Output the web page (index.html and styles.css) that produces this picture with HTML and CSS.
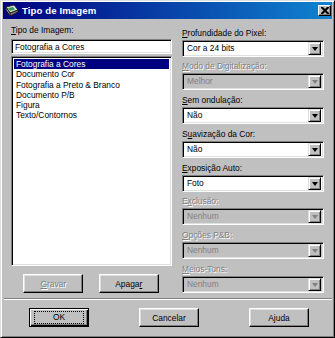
FILE: index.html
```html
<!DOCTYPE html>
<html>
<head>
    <meta charset="UTF-8">
    <title>Tipo de Imagem</title>
    <link rel="stylesheet" href="styles.css">
</head>
<body>
    <div class="window">
        <!-- Title bar -->
        <div class="titlebar">
            <svg class="app-icon" width="14" height="14" viewBox="0 0 14 14">
                <path d="M1 3 L9 1 L13 6 L5 9 Z" fill="#e8e8e8" stroke="#202020" stroke-width="1"/>
                <path d="M5 9 L13 6 L13 8 L5 12 Z" fill="#808080" stroke="#202020" stroke-width="1"/>
                <path d="M1 3 L5 9 L5 12 L1 6 Z" fill="#a0a0a0" stroke="#202020" stroke-width="1"/>
                <path d="M3 4 L8 3 L10 5.5 L5 7 Z" fill="#2f9e44"/>
                <path d="M6 4 L8 3.5 L9 5 Z" fill="#3a7bd5"/>
            </svg>
            <span class="title">Tipo de Imagem</span>
            <div class="close-btn">
                <svg width="8" height="7" viewBox="0 0 8 7">
                    <path d="M0 0h2l2 2 2-2h2v1l-2.5 2.5 2.5 2.5v1h-2l-2-2-2 2h-2v-1l2.5-2.5-2.5-2.5z" fill="#000"/>
                </svg>
            </div>
        </div>

        <div class="content">
            <!-- Left: image type list -->
            <div class="left-col">
                <div class="label"><u>T</u>ipo de Imagem:</div>
                <div class="textbox">Fotografia a Cores</div>
                <div class="listbox">
                    <div class="item selected">Fotografia a Cores</div>
                    <div class="item">Documento Cor</div>
                    <div class="item">Fotografia a Preto &amp; Branco</div>
                    <div class="item">Documento P/B</div>
                    <div class="item">Figura</div>
                    <div class="item">Texto/Contornos</div>
                </div>
                <div class="left-buttons">
                    <div class="btn disabled"><u>G</u>ravar</div>
                    <div class="btn">Apaga<u>r</u></div>
                </div>
            </div>

            <!-- Right: settings -->
            <div class="right-col">
                <div class="field">
                    <div class="label"><u>P</u>rofundidade do Pixel:</div>
                    <div class="combo"><span>Cor a 24 bits</span><div class="drop"><i></i></div></div>
                </div>
                <div class="field disabled">
                    <div class="label"><u>M</u>odo de Digitalização:</div>
                    <div class="combo"><span>Melhor</span><div class="drop"><i></i></div></div>
                </div>
                <div class="field">
                    <div class="label"><u>S</u>em ondulação:</div>
                    <div class="combo"><span>Não</span><div class="drop"><i></i></div></div>
                </div>
                <div class="field">
                    <div class="label">S<u>u</u>avização da Cor:</div>
                    <div class="combo"><span>Não</span><div class="drop"><i></i></div></div>
                </div>
                <div class="field">
                    <div class="label"><u>E</u>xposição Auto:</div>
                    <div class="combo"><span>Foto</span><div class="drop"><i></i></div></div>
                </div>
                <div class="field disabled">
                    <div class="label">E<u>x</u>clusão:</div>
                    <div class="combo"><span>Nenhum</span><div class="drop"><i></i></div></div>
                </div>
                <div class="field disabled">
                    <div class="label"><u>O</u>pções P&amp;B:</div>
                    <div class="combo"><span>Nenhum</span><div class="drop"><i></i></div></div>
                </div>
                <div class="field disabled">
                    <div class="label"><u>M</u>eios-Tons:</div>
                    <div class="combo"><span>Nenhum</span><div class="drop"><i></i></div></div>
                </div>
            </div>
        </div>

        <div class="separator"></div>

        <div class="bottom-buttons">
            <div class="btn default"><span class="focus">OK</span></div>
            <div class="btn">Cancelar</div>
            <div class="btn">Ajuda</div>
        </div>
    </div>
</body>
</html>
```

FILE: styles.css
```css
body {
    margin: 0;
    font-family: "Liberation Sans", Arial, sans-serif;
    font-size: 8.4px;
    color: #000;
    background: #c0c0c0;
}
.window {
    width: 335px;
    height: 338px;
    box-sizing: border-box;
    background: #c0c0c0;
    border: 1px solid;
    border-color: #dfdfdf #000 #000 #dfdfdf;
    box-shadow: inset 1px 1px #fff, inset -1px -1px #808080;
    padding: 1px 2px 2px 2px;
}
/* Title bar */
.titlebar {
    height: 17px;
    display: flex;
    align-items: center;
    padding: 0 1px 0 2px;
    background: linear-gradient(to right, #000080, #1084d0);
    color: #fff;
}
.app-icon {
    margin-right: 3px;
    flex: none;
}
.title {
    font-weight: bold;
    font-size: 9.6px;
    flex: 1;
    letter-spacing: 0.1px;
}
.close-btn {
    width: 13px;
    height: 11px;
    box-sizing: border-box;
    background: #c0c0c0;
    border: 1px solid;
    border-color: #fff #000 #000 #fff;
    box-shadow: inset -1px -1px #808080;
    display: flex;
    align-items: center;
    justify-content: center;
}
/* Layout */
.content {
    display: flex;
    gap: 10px;
    padding: 0 8px 0 8px;
}
.left-col {
    width: 161px;
    padding-top: 4.5px;
}
.right-col {
    width: 142px;
    padding-top: 7.5px;
}
.label {
    line-height: 13px;
    height: 13px;
    white-space: nowrap;
}
.label u, .btn u {
    text-decoration-thickness: 1px;
    text-underline-offset: 1px;
}
/* Sunken controls */
.textbox, .listbox, .combo {
    box-sizing: border-box;
    background: #fff;
    border: 1px solid;
    border-color: #808080 #fff #fff #808080;
    box-shadow: inset 1px 1px #000, inset -1px -1px #dfdfdf;
}
.textbox {
    margin-top: 2.5px;
    height: 15px;
    line-height: 11px;
    padding: 2px 3px;
}
.listbox {
    margin-top: 2px;
    height: 210px;
    padding: 2px;
}
.item {
    line-height: 10.3px;
    height: 10.3px;
    padding-left: 2px;
    white-space: nowrap;
}
.item.selected {
    background: #000080;
    color: #fff;
}
.left-buttons {
    display: flex;
    justify-content: center;
    gap: 15.5px;
    margin-top: 8px;
    padding-right: 1px;
}
/* Combo boxes */
.field {
    height: 33.8px;
}
.combo {
    height: 17px;
    display: flex;
    align-items: center;
    padding: 2px;
}
.combo span {
    flex: 1;
    padding-left: 2px;
    line-height: 13px;
}
.drop {
    width: 13px;
    height: 13px;
    box-sizing: border-box;
    background: #c0c0c0;
    border: 1px solid;
    border-color: #dfdfdf #000 #000 #dfdfdf;
    box-shadow: inset 1px 1px #fff, inset -1px -1px #808080;
    display: flex;
    align-items: center;
    justify-content: center;
}
.drop i {
    width: 0;
    height: 0;
    border-left: 3.5px solid transparent;
    border-right: 3.5px solid transparent;
    border-top: 4px solid #000;
    margin-top: 1px;
}
.field.disabled .label {
    color: #808080;
    text-shadow: 1px 1px #fff;
}
.field.disabled .combo {
    background: #c0c0c0;
    color: #808080;
}
.field.disabled .drop i {
    border-top-color: #808080;
}
/* Buttons */
.btn {
    width: 60px;
    height: 19px;
    box-sizing: border-box;
    background: #c0c0c0;
    border: 1px solid;
    border-color: #fff #000 #000 #fff;
    box-shadow: inset -1px -1px #808080, inset 1px 1px #dfdfdf;
    display: flex;
    align-items: center;
    justify-content: center;
}
.btn.disabled {
    color: #808080;
    text-shadow: 1px 1px #fff;
}
.btn.default {
    border: 1px solid #000;
    box-shadow: inset 1px 1px #fff, inset -1px -1px #000, inset -2px -2px #808080;
}
.btn .focus {
    width: 48px;
    height: 11px;
    border: 1px dotted #000;
    text-align: center;
    line-height: 11px;
}
.separator {
    margin: 1.5px 0 0 1px;
    height: 1px;
    border-top: 1px solid #808080;
    border-bottom: 1px solid #fff;
    height: 0;
}
.bottom-buttons {
    display: flex;
    gap: 50px;
    padding-left: 26px;
    margin-top: 8px;
}
```
